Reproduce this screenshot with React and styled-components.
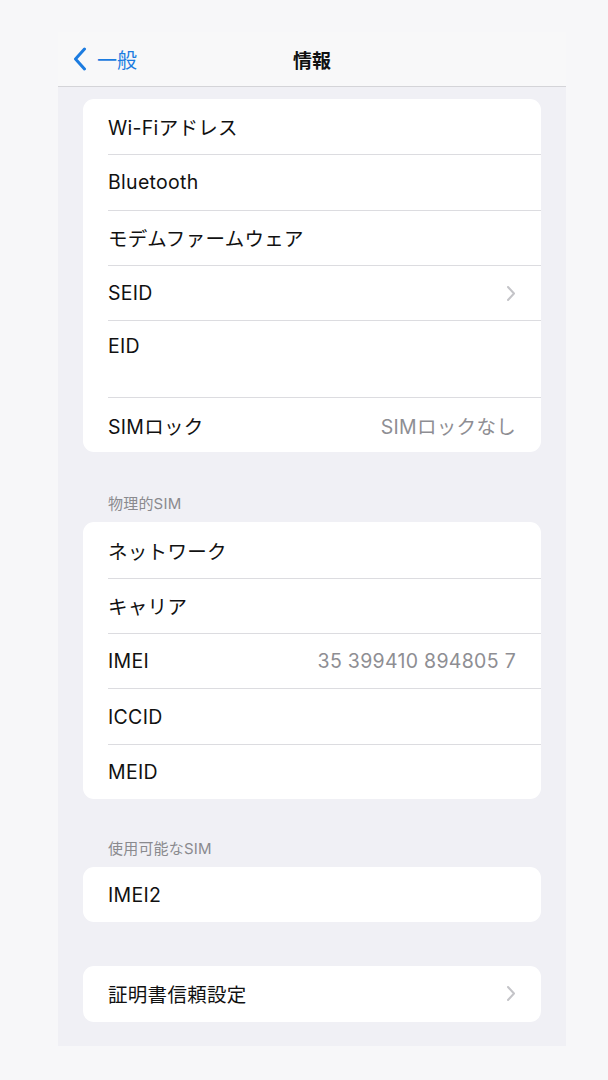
import React from "react";
import styled, { createGlobalStyle } from "styled-components";

const Global = createGlobalStyle`
  body {
    margin: 0;
    background: #f7f7f9;
    font-family: "Inter", "Noto Sans CJK JP", sans-serif;
    -webkit-font-smoothing: antialiased;
  }
`;

const Screen = styled.div`
  width: 508px;
  margin: 32px 0 0 58px;
  background: #f0f0f5;
  padding-bottom: 24px;
`;

const NavBar = styled.div`
  height: 54px;
  background: #f8f8f9;
  border-bottom: 1px solid #d4d4d8;
  display: flex;
  align-items: center;
  position: relative;
`;

const Back = styled.div`
  display: flex;
  align-items: center;
  gap: 10px;
  padding-left: 15px;
  color: #1c7ce0;
  font-size: 20px;
`;

const Title = styled.div`
  position: absolute;
  left: 0;
  right: 0;
  text-align: center;
  font-size: 19px;
  font-weight: 700;
  color: #111;
  pointer-events: none;
`;

const Content = styled.div`
  padding: 12px 25px 0;
`;

const Card = styled.div`
  background: #fff;
  border-radius: 11px;
  overflow: hidden;
  margin-top: ${(p) => p.$gap || 0}px;
`;

const Row = styled.div`
  display: flex;
  align-items: ${(p) => (p.$tall ? "flex-start" : "center")};
  justify-content: space-between;
  min-height: ${(p) => (p.$tall ? 77 : 55.3)}px;
  box-sizing: border-box;
  padding: ${(p) => (p.$tall ? "13px 25px 0 0" : "0 25px 0 0")};
  margin-left: 25px;
  border-top: ${(p) => (p.$first ? "none" : "1px solid #dcdce0")};
  font-size: 19.5px;
  letter-spacing: 0.3px;
  color: #111;
`;

const Value = styled.span`
  color: #8e8e93;
`;

const SectionHeader = styled.div`
  margin-top: ${(p) => p.$gap}px;
  padding: 0 25px 9px;
  font-size: 15px;
  letter-spacing: 0.2px;
  color: #8a8a8e;
`;

const Chevron = () => (
  <svg width="10" height="17" viewBox="0 0 10 17">
    <path d="M2 2 L8 8.5 L2 15" fill="none" stroke="#c4c4c8" strokeWidth="2" strokeLinecap="round" strokeLinejoin="round" />
  </svg>
);

const BackChevron = () => (
  <svg width="14" height="24" viewBox="0 0 14 24">
    <path d="M11.5 2 L2.5 12 L11.5 22" fill="none" stroke="#1c7ce0" strokeWidth="3" strokeLinecap="round" strokeLinejoin="round" />
  </svg>
);

function Item({ label, value, chevron, first, tall }) {
  return (
    <Row $first={first} $tall={tall}>
      <span>{label}</span>
      {value && <Value>{value}</Value>}
      {chevron && <Chevron />}
    </Row>
  );
}

export default function App() {
  return (
    <>
      <Global />
      <Screen>
        <NavBar>
          <Back>
            <BackChevron />
            <span>一般</span>
          </Back>
          <Title>情報</Title>
        </NavBar>
        <Content>
          <Card>
            <Item first label="Wi-Fiアドレス" />
            <Item label="Bluetooth" />
            <Item label="モデムファームウェア" />
            <Item label="SEID" chevron />
            <Item label="EID" tall />
            <Item label="SIMロック" value="SIMロックなし" />
          </Card>
          <SectionHeader $gap={40}>物理的SIM</SectionHeader>
          <Card>
            <Item first label="ネットワーク" />
            <Item label="キャリア" />
            <Item label="IMEI" value="35 399410 894805 7" />
            <Item label="ICCID" />
            <Item label="MEID" />
          </Card>
          <SectionHeader $gap={38}>使用可能なSIM</SectionHeader>
          <Card>
            <Item first label="IMEI2" />
          </Card>
          <Card $gap={44}>
            <Item first label="証明書信頼設定" chevron />
          </Card>
        </Content>
      </Screen>
    </>
  );
}
